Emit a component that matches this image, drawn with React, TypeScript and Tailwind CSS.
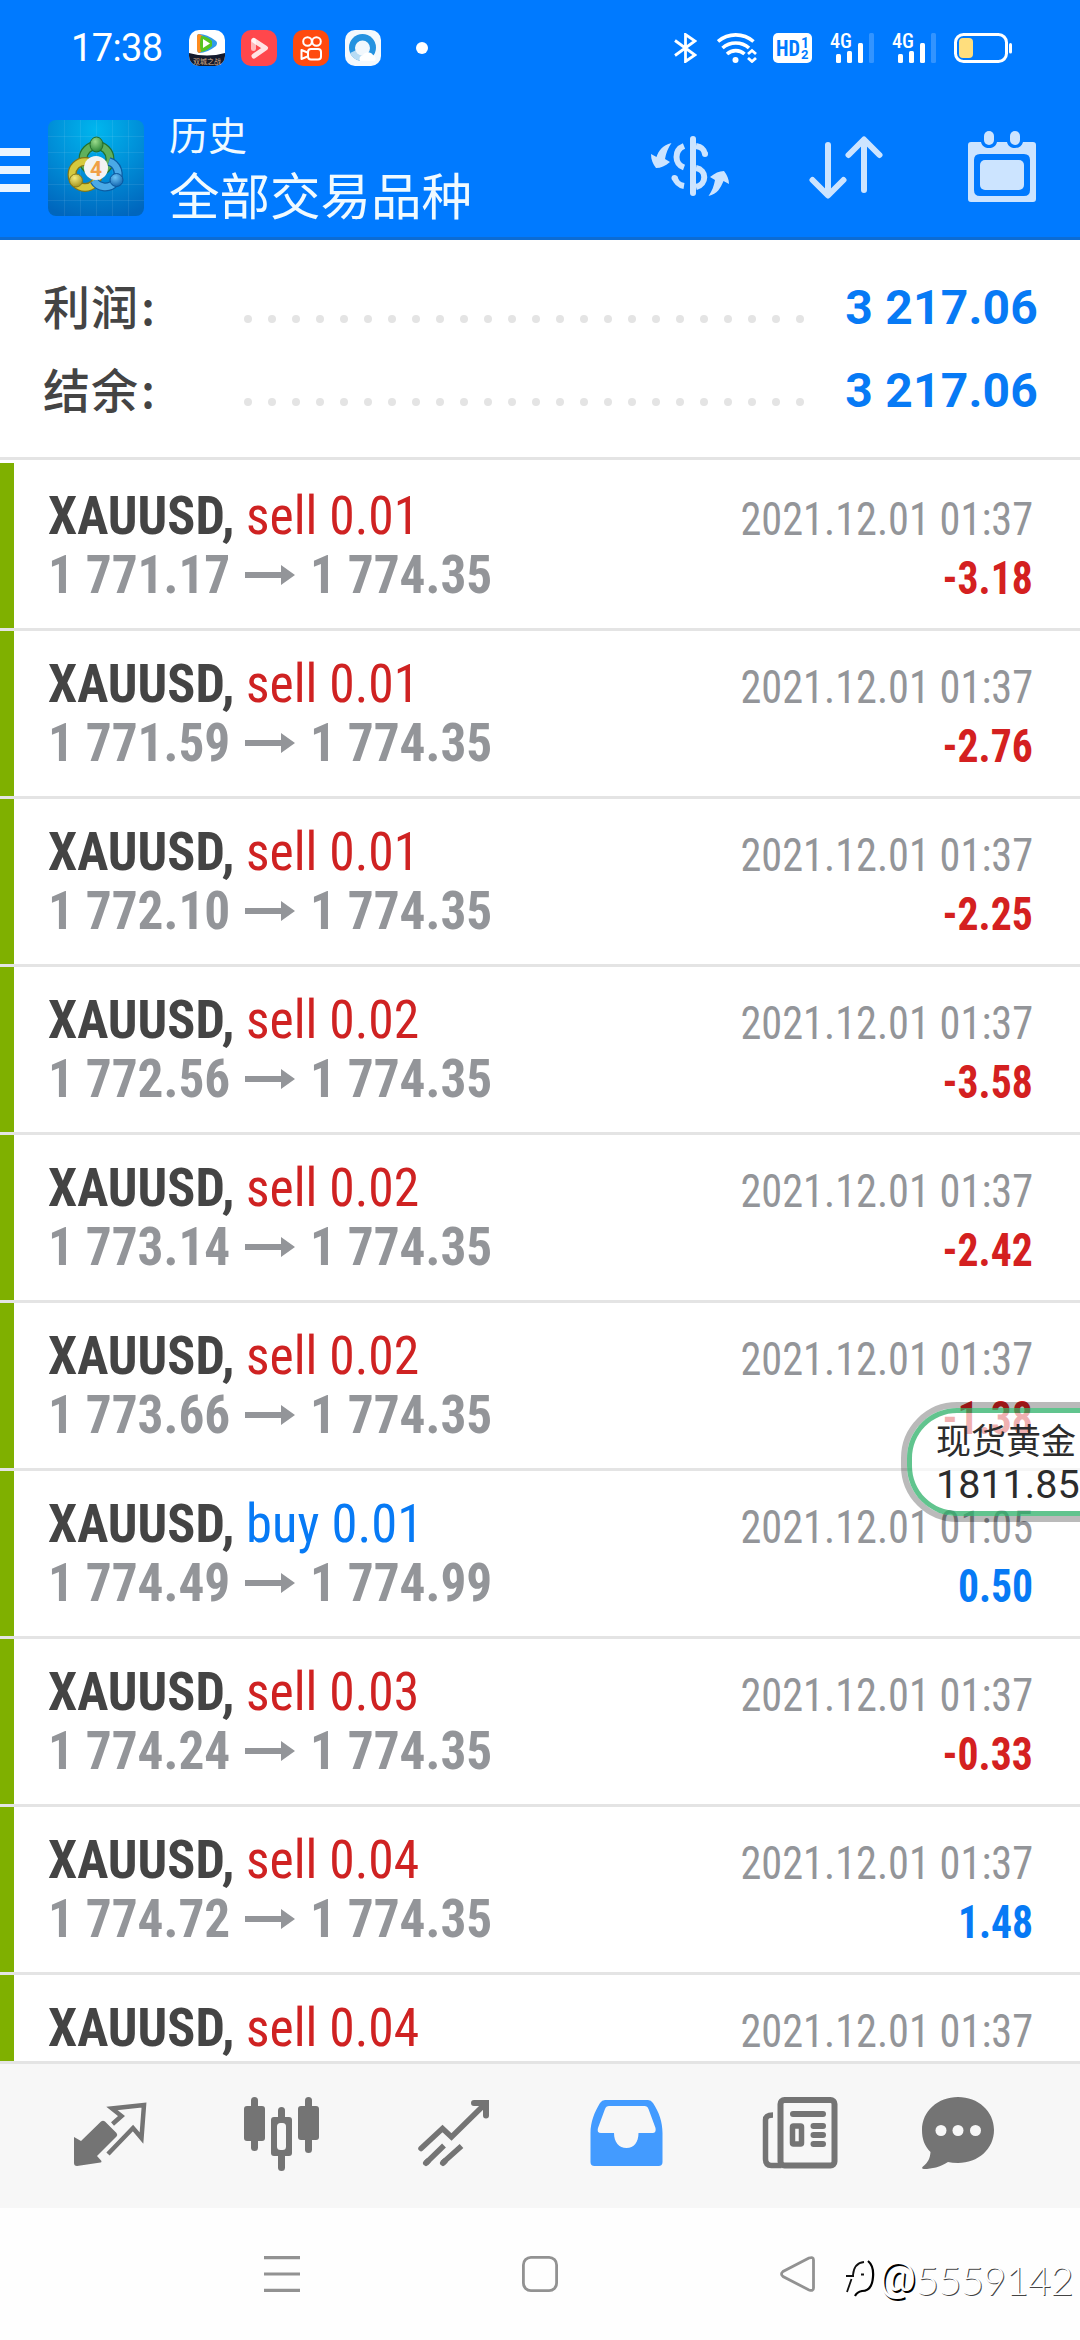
import React from 'react';

interface Deal {
  side: 'sell' | 'buy';
  volume: string;
  open: string;
  close: string;
  time: string;
  profit: string;
}

const deals: Deal[] = [
  { side: 'sell', volume: '0.01', open: '1 771.17', close: '1 774.35', time: '2021.12.01 01:37', profit: '-3.18' },
  { side: 'sell', volume: '0.01', open: '1 771.59', close: '1 774.35', time: '2021.12.01 01:37', profit: '-2.76' },
  { side: 'sell', volume: '0.01', open: '1 772.10', close: '1 774.35', time: '2021.12.01 01:37', profit: '-2.25' },
  { side: 'sell', volume: '0.02', open: '1 772.56', close: '1 774.35', time: '2021.12.01 01:37', profit: '-3.58' },
  { side: 'sell', volume: '0.02', open: '1 773.14', close: '1 774.35', time: '2021.12.01 01:37', profit: '-2.42' },
  { side: 'sell', volume: '0.02', open: '1 773.66', close: '1 774.35', time: '2021.12.01 01:37', profit: '-1.38' },
  { side: 'buy', volume: '0.01', open: '1 774.49', close: '1 774.99', time: '2021.12.01 01:05', profit: '0.50' },
  { side: 'sell', volume: '0.03', open: '1 774.24', close: '1 774.35', time: '2021.12.01 01:37', profit: '-0.33' },
  { side: 'sell', volume: '0.04', open: '1 774.72', close: '1 774.35', time: '2021.12.01 01:37', profit: '1.48' },
];

const StatusBar = () => (
  <div className="flex h-24 items-center pl-[71px] text-white">
    <span className="w-[118px] text-[38px] leading-none tracking-[-0.6px]">17:38</span>
    <div className="flex gap-4">
      {/* Video app */}
      <svg className="h-9 w-9" viewBox="0 0 36 36">
        <clipPath id="tile"><rect width="36" height="36" rx="10" /></clipPath>
        <g clipPath="url(#tile)">
          <rect width="36" height="36" fill="#fff" />
          <path d="M0 23q18 5 36 0v13H0z" fill="#141a2c" />
          <path d="M10 4q-2 0-2 3v12q0 3 2 4 8 0 17-7 2-3 0-5Q18 4 10 4z" fill="#2f9be8" />
          <path d="M10 4q-2 0-2 3v12q0 3 2 4l4-2V6z" fill="#ff8a1c" />
          <path d="M12 6q-2 8 0 16 6-1 11-6v-5Q18 6 12 6z" fill="#54c422" />
          <path d="M14 9v9l7-4.500z" fill="#fff" />
        </g>
        <text x="18" y="34" textAnchor="middle" fontSize="7" fill="#d7b08c" className="font-['Noto_Sans_CJK_SC']">双城之战</text>
      </svg>
      <svg className="h-9 w-9" viewBox="0 0 36 36">
        <rect width="36" height="36" rx="10" fill="#ff474c" />
        <path d="M12.500 10.500v8" stroke="#ffb9bb" strokeWidth="5" strokeLinecap="round" />
        <path d="M13 10.500 24.500 18 13 26" fill="none" stroke="#fff" strokeWidth="5" strokeLinecap="round" strokeLinejoin="round" opacity=".85" />
      </svg>
      <svg className="h-9 w-9" viewBox="0 0 36 36">
        <rect width="36" height="36" rx="10" fill="#ff4a0e" />
        <g fill="none" stroke="#fff" strokeWidth="2">
          <circle cx="14.500" cy="11.500" r="4.300" />
          <circle cx="23.500" cy="11.500" r="4.300" />
          <rect x="15" y="19" width="13" height="10.500" rx="3" />
          <path d="M14.500 22.500 8.500 20v9l6-2.500" strokeLinejoin="round" />
        </g>
      </svg>
      <svg className="h-9 w-9" viewBox="0 0 36 36">
        <rect width="36" height="36" rx="10" fill="#f4f9fd" />
        <circle cx="17.500" cy="17.500" r="13.500" fill="#2492e0" />
        <path d="M5 23a13 13 0 0 0 13 8l8-3-6-12z" fill="#b8dcf4" />
        <circle cx="17.500" cy="18" r="7.500" fill="#f2f8fd" />
        <path d="M15 31a4 4 0 0 1 3-6 6 6 0 0 1 10 0 4 4 0 0 1 2 6z" fill="#fff" />
      </svg>
    </div>
    <span className="ml-[35px] h-3 w-3 rounded-full bg-white" />

    {/* Connection and battery */}
    <svg className="ml-[246px] h-[30px] w-[23px]" viewBox="0 0 23 30" fill="none" stroke="#fff" strokeWidth="2.800">
      <path d="M1 7.500 21 22 11.500 28.500v-27L21 8 1 22.500" />
    </svg>
    <svg className="ml-[20px] h-[30px] w-[40px]" viewBox="0 0 40 30" fill="none" stroke="#fff" strokeWidth="3.600">
      <path d="M1 8.500a27 27 0 0 1 35.500 0" />
      <path d="M5.500 15a20 20 0 0 1 26.500 0" />
      <path d="M10 21a13 13 0 0 1 17.500 0" />
      <circle cx="18.500" cy="27" r="3" fill="#fff" stroke="none" />
      <path d="m31 21 4-3.500 4 3.500M31 25l4 3.500 4-3.500" strokeWidth="2.800" />
    </svg>
    <svg className="ml-4 h-[30px] w-[39px]" viewBox="0 0 39 30">
      <rect width="39" height="30" rx="5" fill="#fff" />
      <text x="3" y="23" fontSize="22" fontWeight="700" fill="#007aff" textLength="24" lengthAdjust="spacingAndGlyphs" className="font-['Roboto_Condensed']">HD</text>
      <text x="28" y="15" fontSize="14" fontWeight="700" fill="#007aff" className="font-[Roboto]">1</text>
      <text x="28" y="26" fontSize="13" fontWeight="700" fill="#007aff" className="font-[Roboto]">2</text>
    </svg>
    <Signal className="ml-[18px]" />
    <Signal className="ml-[17px]" />
    <svg className="ml-[17px] h-[30px] w-[59px]" viewBox="0 0 59 30">
      <rect x="1.500" y="1.500" width="51" height="27" rx="8" fill="none" stroke="#fff" strokeWidth="3" />
      <rect x="5" y="5" width="14" height="20" rx="4" fill="#ffde7d" />
      <rect x="55" y="10" width="3" height="10.500" rx="1.500" fill="#fff" />
    </svg>
  </div>
);

const Signal = ({ className }: { className: string }) => (
  <svg className={`h-[30px] w-[45px] overflow-visible ${className}`} viewBox="0 0 45 30" fill="#fff">
    <text x="0" y="15" fontSize="20" fontWeight="500" textLength="22" lengthAdjust="spacingAndGlyphs" className="font-['Roboto_Condensed']">4G</text>
    <rect x="6" y="21" width="5" height="9" rx="1.500" />
    <rect x="17" y="18" width="5" height="12" rx="1.500" />
    <rect x="28" y="10" width="5" height="20" rx="1.500" />
    <rect x="39" y="0" width="5" height="30" rx="1.500" opacity=".2" />
  </svg>
);

const AppLogo = () => (
  <svg className="ml-[18px] h-24 w-24" viewBox="0 0 96 96">
    <defs>
      <radialGradient id="sky" cx=".5" cy=".1" r=".95">
        <stop offset="0" stopColor="#00b6ee" />
        <stop offset=".5" stopColor="#008fd8" />
        <stop offset="1" stopColor="#0066bd" />
      </radialGradient>
      <radialGradient id="green" cx=".4" cy=".3" r=".8"><stop offset="0" stopColor="#9bdc8c" /><stop offset="1" stopColor="#1c7a2c" /></radialGradient>
      <radialGradient id="gold" cx=".4" cy=".3" r=".8"><stop offset="0" stopColor="#f6ec7c" /><stop offset="1" stopColor="#9c8a14" /></radialGradient>
      <radialGradient id="azure" cx=".4" cy=".3" r=".8"><stop offset="0" stopColor="#6cc4f6" /><stop offset="1" stopColor="#0a5ba8" /></radialGradient>
    </defs>
    <rect width="96" height="96" rx="8" fill="url(#sky)" />
    <path d="M0 16.500h96M0 32.500h96M0 48.500h96M0 64.500h96M0 80.500h96M16.500 0v96M32.500 0v96M48.500 0v96M64.500 0v96M80.500 0v96" stroke="#fff" strokeOpacity=".08" />
    <g fill="none">
      <circle cx="48.500" cy="39" r="13.500" stroke="#23702f" strokeWidth="9" />
      <circle cx="48.500" cy="39" r="13.500" stroke="#5fb05c" strokeWidth="6.500" />
      <circle cx="37" cy="54.500" r="13" stroke="#857614" strokeWidth="9" />
      <circle cx="37" cy="54.500" r="13" stroke="#d6c93e" strokeWidth="6.500" />
      <path d="M61 41.500a13 13 0 1 1-15 19" stroke="#0b5ca2" strokeWidth="9" />
      <path d="M61 41.500a13 13 0 1 1-15 19" stroke="#4aa9e6" strokeWidth="6.500" />
    </g>
    <ellipse cx="48.500" cy="24.500" rx="6.500" ry="7.500" fill="url(#green)" stroke="#216b2c" />
    <circle cx="28" cy="60.500" r="6.500" fill="url(#gold)" stroke="#87791a" />
    <circle cx="68.500" cy="60" r="6.500" fill="url(#azure)" stroke="#0b559b" />
    <circle cx="48" cy="48" r="12" fill="#f3f3f3" />
    <text x="48" y="55.500" textAnchor="middle" fontSize="21" fontWeight="700" fill="#f0a045" className="font-[Roboto]">4</text>
  </svg>
);

const Header = () => (
  <header className="h-60 border-b-[3px] border-[#0c6cd4] bg-[#007aff]">
    <StatusBar />
    <div className="flex h-[141px] items-center pt-[3px]">
      <div className="flex w-[30px] flex-col gap-2.5 pt-1">
        <span className="h-2 bg-[#ebf5ff]" />
        <span className="h-2 bg-[#ebf5ff]" />
        <span className="h-2 bg-[#ebf5ff]" />
      </div>
      <AppLogo />
      <div className="ml-[25px] flex w-[482px] flex-col pb-1.5 font-['Noto_Sans_CJK_SC'] text-[#f0faff]">
        <span className="text-[39px] leading-[56px]">历史</span>
        <span className="text-[50.500px] leading-[64px]">全部交易品种</span>
      </div>
      {/* Currency */}
      <svg className="h-[76px] w-[78px]" viewBox="651 130 78 76" fill="none" stroke="#cce4ff" strokeWidth="6">
        <path d="M693 139v54" strokeLinecap="round" />
        <path d="M684 146c-10 4-10 18 0 21.500M684 186c-6-1-8-4-9.500-9" />
        <path d="M674.500 178v-.1" strokeLinecap="round" />
        <path d="M696 146c6 1 8 3 9 8M696 168c11 2 11 16 0 19" />
        <path d="M705 154v-.1" strokeLinecap="round" />
        <path d="M671.500 143c-9 2-13 8-15 14l-5.500-3c0 6 2 10 5 14 5 0 9-2 14-6l-5-3c1-6 3-11 6.500-16zM708.500 196c9-2 12-8 15-15l5.500 3c0-5-2-9-5-13-5 0-9 2-14 6l5 3c-1 6-3 11-6.500 16z" fill="#cce4ff" stroke="none" />
      </svg>
      {/* Sort */}
      <svg className="ml-[80px] h-[76px] w-[75px]" viewBox="809 130 75 76" fill="none" stroke="#cce4ff" strokeWidth="6" strokeLinecap="round" strokeLinejoin="round">
        <path d="M828 145v50M812.500 180 828 195.500 843.500 180M864 190v-50M848.500 155 864 139.500 879.500 155" />
      </svg>
      {/* Calendar */}
      <svg className="ml-[84px] h-[76px] w-[68px]" viewBox="968 130 68 76" fill="#cce4ff">
        <path fillRule="evenodd" d="M971 142h10c1 4 4 6 8 6s7-2 8-6h10c1 4 4 6 8 6s7-2 8-6h10q3 0 3 3v54q0 3-3 3h-62q-3 0-3-3v-54q0-3 3-3zm9 12q-6 0-6 6v30q0 6 6 6h44q6 0 6-6v-30q0-6-6-6z" />
        <rect x="980" y="160" width="44" height="30" rx="5" />
        <rect x="984" y="131" width="10" height="14" rx="5" />
        <rect x="1010" y="131" width="10" height="14" rx="5" />
      </svg>
    </div>
  </header>
);

const SummaryRow = ({ label, value }: { label: string; value: string }) => (
  <div className="flex h-[83px] items-center px-[43px]">
    <div className="flex w-[201px] pb-1.5 font-['Noto_Sans_CJK_SC'] text-[47px] font-medium leading-[77px] tracking-[1px] text-[#444]">
      {label}<span className="ml-0.5">:</span>
    </div>
    <div className="flex gap-4 pt-[23px]">
      {Array.from({ length: 24 }, (_, i) => <span key={i} className="h-2 w-2 rounded-full bg-[#e4e4e4]" />)}
    </div>
    <span className="-mr-px ml-auto text-[48px] font-bold leading-none tracking-[0.2px] text-[#077af5]">{value}</span>
  </div>
);

const DealRow = ({ deal }: { deal: Deal }) => (
  <div className="flex h-[168px] shrink-0 border-b-[3px] border-[#e4e4e4] font-['Roboto_Condensed']">
    <div className="w-3.5 bg-[#7fb000]" />
    <div className="flex flex-1 justify-between pl-[34px] pr-[47px] leading-[59px]">
      <div className="flex flex-col pt-[23px] text-[54px]">
        <div className="flex h-[59px]">
          <span className="w-[198px] origin-left scale-x-[0.965] font-bold text-[#444]">XAUUSD,</span>
          {deal.side === 'sell'
            ? <span className="origin-left scale-x-[0.955] text-[#cf2222]">sell {deal.volume}</span>
            : <span className="origin-left scale-x-[0.975] text-[#077af5]">buy {deal.volume}</span>}
        </div>
        <div className="flex h-[59px] items-center font-bold text-[#939599]">
          <span className="w-[197px] origin-left scale-x-[0.95]">{deal.open}</span>
          <svg className="h-5 w-[50px]" viewBox="0 0 50 20" fill="#939599"><path d="M0 7h36V0l14 10-14 10v-7H0z" /></svg>
          <span className="ml-[15px] origin-left scale-x-[0.95]">{deal.close}</span>
        </div>
      </div>
      <div className="flex flex-col items-end pt-[27px] text-[46px]">
        <span className="h-[59px] origin-right scale-x-[0.92] text-[#939599]">{deal.time}</span>
        <span className={`h-[59px] origin-right scale-x-[0.905] font-bold ${deal.profit.startsWith('-') ? 'text-[#d42020]' : 'text-[#077af5]'}`}>{deal.profit}</span>
      </div>
    </div>
  </div>
);

// Last row is mostly behind the tab bar, only its first line shows
const ClippedRow = () => (
  <div className="flex flex-1 font-['Roboto_Condensed']">
    <div className="w-3.5 bg-[#7fb000]" />
    <div className="flex flex-1 justify-between pl-[34px] pr-[47px] leading-[59px]">
      <div className="flex pt-[23px] text-[54px]">
        <span className="w-[198px] origin-left scale-x-[0.965] font-bold text-[#444]">XAUUSD,</span>
        <span className="origin-left scale-x-[0.955] text-[#cf2222]">sell 0.04</span>
      </div>
      <span className="origin-right scale-x-[0.92] pt-[27px] text-[46px] text-[#939599]">2021.12.01 01:37</span>
    </div>
  </div>
);

const TabBar = () => (
  <nav className="flex h-[147px] items-center gap-[92px] border-t-[3px] border-[#e4e4e4] bg-[#f7f7f7] pl-[70px]">
    {/* Quotes */}
    <svg className="h-24 w-20" viewBox="70 2088 80 96" fill="#747474">
      <path d="M74 2137 81 2141 101 2121.500q2-1.500 4 0L116.500 2133q1.500 2 0 3.500L97 2156l4.500 5q0 1.500-1 1.500L77 2166q-3 0-3-3z" />
      <path d="M112.500 2124 121.500 2116 112 2108.500 144 2105 141.500 2138 133 2128 108 2154" fill="none" stroke="#747474" strokeWidth="4.500" />
    </svg>
    {/* Chart */}
    <svg className="h-24 w-20" viewBox="242 2088 80 96" fill="#747474">
      <rect x="244" y="2106" width="21" height="35" rx="3" />
      <rect x="251" y="2097" width="7" height="54" rx="3.500" />
      <rect x="298" y="2106" width="21" height="34" rx="3" />
      <rect x="305" y="2097" width="7" height="56" rx="3.500" />
      <rect x="278" y="2107" width="7" height="64" rx="3.500" />
      <rect x="271" y="2117" width="21" height="39" rx="3" />
      <rect x="277" y="2123" width="9" height="27" rx="3.500" fill="#f7f7f7" />
    </svg>
    {/* Trade */}
    <svg className="h-24 w-20" viewBox="414 2088 80 96" fill="none" stroke="#747474" strokeWidth="5.500" strokeLinecap="round">
      <path d="M421 2148.500 442.500 2128.500 451.500 2137 484 2105" />
      <path d="M474 2103h12v12.500" strokeWidth="6" />
      <path d="M426 2163l1.500-1.500M443 2163l1.500-1.500" strokeWidth="6" />
      <path d="M426 2163 444 2145.500M442.500 2163 461.500 2146" strokeLinecap="butt" />
    </svg>
    {/* History */}
    <svg className="h-24 w-20" viewBox="586 2088 80 96" fill="#439bff">
      <path fillRule="evenodd" d="M605 2100h43q3 0 5 3c6 9 9.500 19 9.500 30v29q0 4-4 4h-64q-4 0-4-4v-29c0-11 4-21 9.500-30q2-3 5-3zm4 6q-3 0-4 3l-7 19q-1.500 5 3 5h13c0 9 5 15 12.500 15s12-6 12-15h14q4 0 3-5l-7-19q-1-3-4-3z" />
    </svg>
    {/* News */}
    <svg className="h-24 w-20" viewBox="758 2088 80 96" fill="none" stroke="#747474" strokeWidth="6">
      <rect x="780.500" y="2100" width="54" height="65.500" rx="4" />
      <path d="M773 2115q-7.500 0-7.500 5v39q0 6.500 6 6.500h10" strokeWidth="5.500" />
      <path d="M793 2114h30M813.500 2126h9.500M813.500 2135h9.500M813.500 2144h9.500" strokeLinecap="round" />
      <rect x="792.500" y="2126" width="9" height="18" rx="1" strokeWidth="5.500" />
    </svg>
    {/* Messages */}
    <svg className="-ml-3.5 h-24 w-20" viewBox="916 2088 80 96" fill="#747474">
      <path d="M958 2097c20 0 36 14 36 33s-16 33-36 33q-6 0-10-1c-8 5-16 7-24 7-2 0-2.500-1.500-1-2.500 5-4 7-8 7.500-14.500-6-6-8.500-13-8.500-22 0-19 16-33 36-33z" />
      <g fill="#f7f7f7"><circle cx="941" cy="2130.500" r="5.500" /><circle cx="958" cy="2130.500" r="5.500" /><circle cx="975.500" cy="2130.500" r="5.500" /></g>
    </svg>
  </nav>
);

const SystemNav = () => (
  <div className="flex h-[132px] items-center bg-[#fefefe] pl-[264px]">
    <svg className="h-10 w-9" viewBox="0 0 36 40" stroke="#929292" strokeWidth="3.200"><path d="M0 3.600h36M0 20h36M0 36.400h36" /></svg>
    <svg className="ml-[222px] h-10 w-9" viewBox="0 0 36 40" fill="none" stroke="#929292" strokeWidth="2.800"><rect x="1.400" y="3.400" width="33.200" height="33.200" rx="7.500" /></svg>
    <svg className="ml-[222px] h-10 w-9" viewBox="0 0 36 40" fill="none" stroke="#929292" strokeWidth="2.800"><path d="M29 4 3 17.500Q0 20 3 22.500L29 36q4.500 1.500 4.500-2V6q0-3.500-4.500-2z" /></svg>
    <div className="ml-[27px] flex items-center pt-3 font-[Lato] leading-none text-white">
      <svg className="h-12 w-9" viewBox="0 0 36 48" fill="none">
        <path d="M3 20h8M4 36 8.500 23M10 19q1-12 11-13M18 18.500h3" stroke="#111" strokeWidth="1.800" />
        <path d="M25 5q6 5 5 16-1 14-11 14-5 1-7 5" stroke="#000" strokeWidth="2.200" />
      </svg>
      <span className="pb-1.5 font-[Roboto] text-[41px] [text-shadow:1.5px_1.5px_0_#000]">@</span>
      <span className="text-[40px] font-light tracking-[-0.8px] [text-shadow:1px_1px_0.5px_#444]">5559142</span>
    </div>
  </div>
);

export default function App() {
  return (
    <div className="relative flex h-[2340px] w-[1080px] flex-col overflow-hidden bg-white font-[Roboto]">
      <Header />
      <section className="h-[220px] border-b-[3px] border-[#e4e4e4] pt-[26px]">
        <SummaryRow label="利润" value="3 217.06" />
        <SummaryRow label="结余" value="3 217.06" />
      </section>
      <main className="flex h-[1601px] flex-col overflow-hidden pt-[3px]">
        {deals.map((deal, i) => <DealRow key={i} deal={deal} />)}
        <ClippedRow />
      </main>
      <TabBar />
      <SystemNav />

      {/* Floating quote */}
      <div className="absolute left-[901px] top-[1402px] h-[120px] w-[240px] rounded-[56px] border-[6px] border-black/27">
        <div className="h-full rounded-[50px] border-[5px] border-[#24ad63]/72 bg-white/65 bg-clip-padding pl-6 pt-[5px] text-[#2c2c2c]">
          <div className="font-['Noto_Sans_CJK_SC'] text-[35px] leading-[42px]">现货黄金</div>
          <div className="pt-[3px] text-[39.500px] leading-[44px]">1811.85</div>
        </div>
      </div>
    </div>
  );
}
